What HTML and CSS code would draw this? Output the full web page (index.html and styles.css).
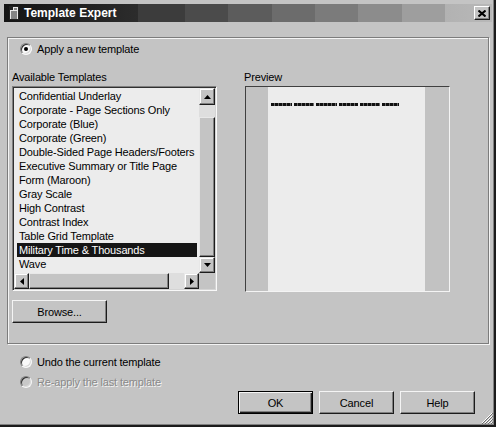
FILE: index.html
```html
<!DOCTYPE html>
<html>
<head>
<meta charset="utf-8">
<link rel="stylesheet" href="styles.css">
</head>
<body>
<div class="window">
  <div class="titlebar">
    <svg class="ticon" width="10" height="14" viewBox="0 0 10 14">
      <rect x="0.5" y="0.5" width="9" height="13" fill="#e8e8e8" stroke="#202020"/>
      <rect x="1" y="1" width="3" height="3" fill="#202020"/>
      <line x1="2" y1="6" x2="8" y2="6" stroke="#202020"/>
      <line x1="2" y1="8" x2="8" y2="8" stroke="#202020"/>
      <line x1="2" y1="10" x2="8" y2="10" stroke="#202020"/>
      <line x1="2" y1="12" x2="8" y2="12" stroke="#202020"/>
      <line x1="5" y1="3" x2="8" y2="3" stroke="#202020"/>
    </svg>
    <span class="title">Template Expert</span>
    <div class="close">
      <svg width="8" height="7" viewBox="0 0 8 7">
        <path d="M0.5 0.5 L7.5 6.5 M7.5 0.5 L0.5 6.5" stroke="#000" stroke-width="2" fill="none"/>
      </svg>
    </div>
  </div>
  <div class="content">
    <div class="group">
      <div class="radio-row in-group">
        <span class="radio checked"></span>
        <span class="rlabel">Apply a new template</span>
      </div>
      <div class="cols">
        <div class="col-left">
          <div class="label">Available Templates</div>
          <div class="listbox">
            <div class="list-main">
              <ul class="items">
                <li>Confidential Underlay</li>
                <li>Corporate - Page Sections Only</li>
                <li>Corporate (Blue)</li>
                <li>Corporate (Green)</li>
                <li>Double-Sided Page Headers/Footers</li>
                <li>Executive Summary or Title Page</li>
                <li>Form (Maroon)</li>
                <li>Gray Scale</li>
                <li>High Contrast</li>
                <li>Contrast Index</li>
                <li>Table Grid Template</li>
                <li class="selected">Military Time &amp; Thousands</li>
                <li>Wave</li>
              </ul>
              <div class="vscroll">
                <div class="sbtn up"><svg width="7" height="4" viewBox="0 0 7 4"><path d="M3.5 0 L7 4 L0 4 Z" fill="#000"/></svg></div>
                <div class="vtrack"></div>
                <div class="vthumb"></div>
                <div class="sbtn down"><svg width="7" height="4" viewBox="0 0 7 4"><path d="M0 0 L7 0 L3.5 4 Z" fill="#000"/></svg></div>
              </div>
            </div>
            <div class="hrow">
              <div class="hscroll">
                <div class="sbtn hbtn"><svg width="4" height="7" viewBox="0 0 4 7"><path d="M4 0 L4 7 L0 3.5 Z" fill="#000"/></svg></div>
                <div class="hthumb"></div>
                <div class="htrack"></div>
                <div class="sbtn hbtn"><svg width="4" height="7" viewBox="0 0 4 7"><path d="M0 0 L4 3.5 L0 7 Z" fill="#000"/></svg></div>
              </div>
              <div class="corner"></div>
            </div>
          </div>
          <button class="btn browse">Browse...</button>
        </div>
        <div class="col-right">
          <div class="label">Preview</div>
          <div class="preview">
            <div class="page">
              <div class="hdr">
                <span class="seg w21"></span><span class="seg w20"></span><span class="seg w21"></span><span class="seg w19"></span><span class="seg w20"></span><span class="seg w17"></span>
              </div>
            </div>
          </div>
        </div>
      </div>
    </div>
    <div class="radio-row undo">
      <span class="radio"></span>
      <span class="rlabel">Undo the current template</span>
    </div>
    <div class="radio-row reapply disabled">
      <span class="radio"></span>
      <span class="rlabel">Re-apply the last template</span>
    </div>
    <div class="buttons">
      <button class="btn default">OK</button>
      <button class="btn">Cancel</button>
      <button class="btn">Help</button>
    </div>
  </div>
  <svg class="grip" width="12" height="12" viewBox="0 0 12 12">
    <path d="M11 1 L1 11 M11 4 L4 11 M11 7 L7 11 M11 10 L10 11" stroke="#fff" stroke-width="1" fill="none"/>
    <path d="M12 1 L1 12 M12 4 L4 12 M12 7 L7 12 M12 10 L10 12" stroke="#707070" stroke-width="1" fill="none"/>
  </svg>
</div>
</body>
</html>
```
FILE: styles.css
```css
html, body {
  margin: 0;
  padding: 0;
  background: #c4c4c4;
}
body {
  font-family: "Liberation Sans", Arial, sans-serif;
  font-size: 11px;
  letter-spacing: -0.15px;
  color: #000;
}
.window {
  position: relative;
  width: 496px;
  height: 427px;
  box-sizing: border-box;
  background: #c4c4c4;
  border-right: 2px solid #1c1c1c;
  border-bottom: 2px solid #1c1c1c;
  padding: 4px 2px 0 4px;
  box-shadow: inset -1px -1px 0 #808080;
  overflow: hidden;
}
.titlebar {
  height: 18px;
  display: flex;
  align-items: center;
  color: #fff;
  background: linear-gradient(to right,
    #141414 0, #2c2c2c 134px,
    #3c3c3c 134px, #3c3c3c 181px,
    #4b4b4b 181px, #4b4b4b 224px,
    #5c5c5c 224px, #5c5c5c 268px,
    #6c6c6c 268px, #6c6c6c 311px,
    #7b7b7b 311px, #7b7b7b 354px,
    #8c8c8c 354px, #8c8c8c 398px,
    #9e9e9e 398px, #9e9e9e 441px,
    #b2b2b2 441px, #b8b8b8 100%);
}
.ticon {
  margin-left: 5px;
  flex: none;
}
.title {
  margin-left: 5px;
  font-weight: bold;
  font-size: 12px;
  letter-spacing: 0;
  flex: 1;
}
.close {
  width: 16px;
  height: 14px;
  box-sizing: border-box;
  margin-right: 2px;
  background: #c4c4c4;
  border: 1px solid;
  border-color: #fff #1c1c1c #1c1c1c #fff;
  box-shadow: inset -1px -1px 0 #808080;
  display: flex;
  align-items: center;
  justify-content: center;
}
.content {
  display: flex;
  flex-direction: column;
}
.group {
  margin: 15px 0 0 3px;
  width: 482px;
  height: 307px;
  box-sizing: border-box;
  border: 1px solid #7c7c7c;
  box-shadow: inset 1px 1px 0 #f4f4f4, 1px 1px 0 #f4f4f4;
}
.radio-row {
  display: flex;
  align-items: center;
  height: 12px;
}
.radio-row.in-group {
  margin: 5px 0 0 12px;
}
.radio {
  width: 12px;
  height: 12px;
  box-sizing: border-box;
  border-radius: 50%;
  border: 1px solid;
  border-color: #808080 #f8f8f8 #f8f8f8 #808080;
  background: #fafafa;
  box-shadow: inset 1px 1px 0 #303030, inset -1px -1px 0 #d8d8d8;
  position: relative;
  flex: none;
}
.radio.checked::after {
  content: "";
  position: absolute;
  left: 3px;
  top: 3px;
  width: 4px;
  height: 4px;
  border-radius: 50%;
  background: #000;
}
.rlabel {
  margin-left: 5px;
  line-height: 13px;
}
.cols {
  display: flex;
  margin: 16px 0 0 4px;
}
.col-left {
  width: 205px;
  display: flex;
  flex-direction: column;
  align-items: flex-start;
}
.col-right {
  margin-left: 27px;
  display: flex;
  flex-direction: column;
}
.label {
  height: 13px;
  line-height: 13px;
}
.listbox {
  margin-top: 2px;
  width: 205px;
  box-sizing: border-box;
  border: 1px solid;
  border-color: #808080 #f8f8f8 #f8f8f8 #808080;
  padding: 1px;
  background: #ececec;
  box-shadow: inset 1px 1px 0 #303030, inset -1px -1px 0 #d4d4d4;
}
.list-main {
  display: flex;
  height: 185px;
}
.items {
  flex: 1;
  margin: 0;
  padding: 1px 2px 0 3px;
  list-style: none;
  overflow: hidden;
}
.items li {
  height: 14px;
  line-height: 14px;
  padding-left: 2px;
  white-space: nowrap;
  overflow: hidden;
}
.items li.selected {
  background: #151515;
  color: #fff;
}
.vscroll {
  width: 16px;
  display: flex;
  flex-direction: column;
  background: #c4c4c4;
}
.sbtn {
  box-sizing: border-box;
  background: #c4c4c4;
  border: 1px solid;
  border-color: #e8e8e8 #1c1c1c #1c1c1c #e8e8e8;
  box-shadow: inset -1px -1px 0 #808080, inset 1px 1px 0 #fff;
  display: flex;
  align-items: center;
  justify-content: center;
  flex: none;
}
.sbtn.up {
  height: 17px;
}
.sbtn.down {
  height: 16px;
}
.vtrack {
  height: 12px;
  background: #dedede;
}
.vthumb {
  flex: 1;
  box-sizing: border-box;
  background: #c4c4c4;
  border: 1px solid;
  border-color: #e8e8e8 #1c1c1c #1c1c1c #e8e8e8;
  box-shadow: inset -1px -1px 0 #808080;
}
.hrow {
  display: flex;
  height: 16px;
}
.hscroll {
  flex: 1;
  display: flex;
}
.hbtn {
  width: 15px;
}
.hthumb {
  width: 140px;
  box-sizing: border-box;
  background: #c4c4c4;
  border: 1px solid;
  border-color: #e8e8e8 #1c1c1c #1c1c1c #e8e8e8;
  box-shadow: inset -1px -1px 0 #808080;
}
.htrack {
  flex: 1;
  background: #dedede;
}
.corner {
  width: 16px;
  background: #c4c4c4;
}
.btn {
  font-family: "Liberation Sans", Arial, sans-serif;
  font-size: 11px;
  letter-spacing: -0.15px;
  color: #000;
  width: 75px;
  height: 23px;
  box-sizing: border-box;
  padding: 0;
  background: #c4c4c4;
  border: 1px solid;
  border-color: #f4f4f4 #1c1c1c #1c1c1c #f4f4f4;
  box-shadow: inset -1px -1px 0 #808080;
  border-radius: 0;
}
.browse {
  margin-top: 9px;
  width: 95px;
}
.preview {
  margin: 2px 0 0 1px;
  width: 205px;
  height: 206px;
  box-sizing: border-box;
  border: 1px solid;
  border-color: #404040 #f4f4f4 #f4f4f4 #404040;
  background: #c2c2c2;
  display: flex;
}
.page {
  margin-left: 22px;
  width: 157px;
  background: #ececec;
  padding-top: 16px;
  box-sizing: border-box;
}
.hdr {
  display: flex;
  gap: 2px;
  margin-left: 3px;
  height: 3px;
}
.seg {
  height: 3px;
  background: repeating-linear-gradient(to right, #111 0, #111 3px, #6a6a6a 3px, #6a6a6a 4px);
}
.w21 { width: 21px; }
.w20 { width: 20px; }
.w19 { width: 19px; }
.w17 { width: 17px; }
.radio-row.undo {
  margin: 12px 0 0 16px;
}
.radio-row.reapply {
  margin: 8px 0 0 16px;
}
.disabled .radio {
  background: #c8c8c8;
}
.disabled .rlabel {
  color: #8a8a8a;
  text-shadow: 1px 1px 0 #f4f4f4;
}
.buttons {
  display: flex;
  justify-content: flex-end;
  gap: 6px;
  margin: 3px 17px 0 0;
}
.btn.default {
  border-color: #000;
  box-shadow: inset 1px 1px 0 #f4f4f4, inset -1px -1px 0 #1c1c1c, inset -2px -2px 0 #808080;
}
.grip {
  position: absolute;
  right: 1px;
  bottom: 1px;
}
```
